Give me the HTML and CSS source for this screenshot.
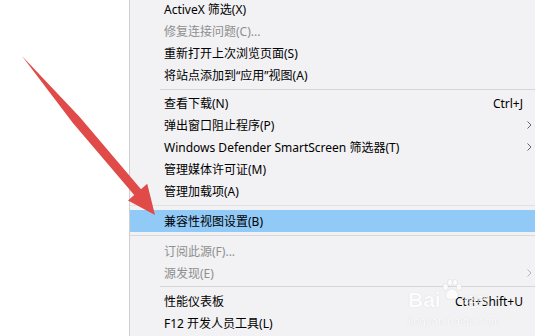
FILE: index.html
```html
<!DOCTYPE html>
<html lang="zh-CN">
<head>
<meta charset="utf-8">
<link rel="stylesheet" href="styles.css">
</head>
<body>
<div class="page">
  <div class="blank"></div>
  <div class="menu">
    <ul class="items">
      <li class="item"><span class="label">ActiveX 筛选(X)</span></li>
      <li class="item disabled"><span class="label">修复连接问题(C)...</span></li>
      <li class="item"><span class="label">重新打开上次浏览页面(S)</span></li>
      <li class="item"><span class="label">将站点添加到“应用”视图(A)</span></li>
      <li class="sep sep-a"></li>
      <li class="item"><span class="label">查看下载(N)</span><span class="key">Ctrl+J</span></li>
      <li class="item"><span class="label">弹出窗口阻止程序(P)</span><svg class="chev" viewBox="0 0 5 8"><polyline points="0.5,0.5 4,4 0.5,7.5"/></svg></li>
      <li class="item"><span class="label">Windows Defender SmartScreen 筛选器(T)</span><svg class="chev" viewBox="0 0 5 8"><polyline points="0.5,0.5 4,4 0.5,7.5"/></svg></li>
      <li class="item"><span class="label">管理媒体许可证(M)</span></li>
      <li class="item"><span class="label">管理加载项(A)</span></li>
      <li class="sep sep-b"></li>
      <li class="item active"><span class="label">兼容性视图设置(B)</span></li>
      <li class="sep sep-c"></li>
      <li class="item disabled"><span class="label">订阅此源(F)...</span></li>
      <li class="item disabled"><span class="label">源发现(E)</span><svg class="chev" viewBox="0 0 5 8"><polyline points="0.5,0.5 4,4 0.5,7.5"/></svg></li>
      <li class="sep sep-d"></li>
      <li class="item"><span class="label">性能仪表板</span><span class="key">Ctrl+Shift+U</span></li>
      <li class="item"><span class="label">F12 开发人员工具(L)</span></li>
    </ul>
  </div>
  <div class="watermark">
    <div class="wm-main">
      <span class="wm-bai">Bai</span>
      <svg class="paw" viewBox="0 0 20 22"><ellipse cx="3.5" cy="8" rx="2.6" ry="3.2"/><ellipse cx="8" cy="3.5" rx="2.4" ry="3"/><ellipse cx="13" cy="3.5" rx="2.4" ry="3"/><ellipse cx="17" cy="8" rx="2.6" ry="3.2"/><path d="M10 10 C6 10 3 15 4 18 C5 21 9 20 10 20 C11 20 15 21 16 18 C17 15 14 10 10 10 Z"/></svg>
      <span class="wm-jy">经验</span>
    </div>
    <div class="wm-url">jingyan.baidu.com</div>
  </div>
  <svg class="arrow" viewBox="0 0 535 336">
    <polygon points="22,56 79.7,117.1 141,189.2 147.2,183.8 155,215 128,200.4 134.2,195 72.9,122.9"/>
  </svg>
</div>
</body>
</html>
```

FILE: styles.css
```css
* { box-sizing: border-box; }
html, body { margin: 0; padding: 0; }
body {
  width: 535px;
  height: 336px;
  overflow: hidden;
  background: #ffffff;
  font-family: "Noto Sans", "Noto Sans CJK SC", sans-serif;
  font-size: 12px;
}
.page {
  position: relative;
  display: flex;
  width: 535px;
  height: 336px;
  overflow: hidden;
}
.blank {
  width: 129px;
  flex: none;
  background: #ffffff;
}
.menu {
  flex: 1;
  background: #f2f1f3;
  border-left: 1px solid #cfcfcf;
  overflow: hidden;
}
.items {
  list-style: none;
  margin: -2px 0 0 0;
  padding: 0;
}
.item {
  display: flex;
  align-items: center;
  height: 22px;
  padding-left: 34px;
  padding-right: 12px;
  color: #000000;
  position: relative;
  white-space: nowrap;
}
.item .label { flex: 1; }
.item .key { color: #000; }
.item.disabled { color: #8f8f8f; }
.item.active { background: #91c9f7; }
.chev {
  position: absolute;
  right: 3px;
  top: 7px;
  width: 5px;
  height: 8px;
  fill: none;
  stroke: #666;
  stroke-width: 1;
}
.item.disabled .chev { stroke: #b5b5b5; }
.sep {
  height: 1px;
  background: #d7d7d7;
  margin-left: 30px;
}
.sep-a { margin-top: 3px; margin-bottom: 2px; }
.sep-b { margin-top: 3px; margin-bottom: 4px; margin-left: 0; background: #e2e2e4; }
.sep-c { margin-top: 3px; margin-bottom: 4px; margin-left: 0; background: #d9d9db; }
.sep-d { margin-top: 2px; margin-bottom: 3px; }
.watermark {
  position: absolute;
  left: 408px;
  top: 279px;
  width: 100px;
  color: #ffffff;
  text-shadow: 0 0 1px rgba(0,0,0,0.16);
  font-family: "Liberation Sans", sans-serif;
  opacity: 0.8;
}
.wm-main {
  display: flex;
  align-items: flex-end;
  height: 32px;
}
.wm-bai { font-size: 21px; font-weight: bold; line-height: 22px; }
.paw {
  width: 20px;
  height: 22px;
  margin: 0 2px 10px 1px;
  fill: #ffffff;
  stroke: rgba(0,0,0,0.12);
  stroke-width: 0.6;
}
.wm-jy {
  font-size: 13px;
  line-height: 16px;
  font-family: "Noto Sans CJK SC", sans-serif;
  margin-bottom: 2px;
}
.wm-url { font-size: 11px; margin-top: 4px; letter-spacing: 0.2px; }
.arrow {
  position: absolute;
  left: 0;
  top: 0;
  width: 535px;
  height: 336px;
  fill: #e04a48;
  pointer-events: none;
}
```
